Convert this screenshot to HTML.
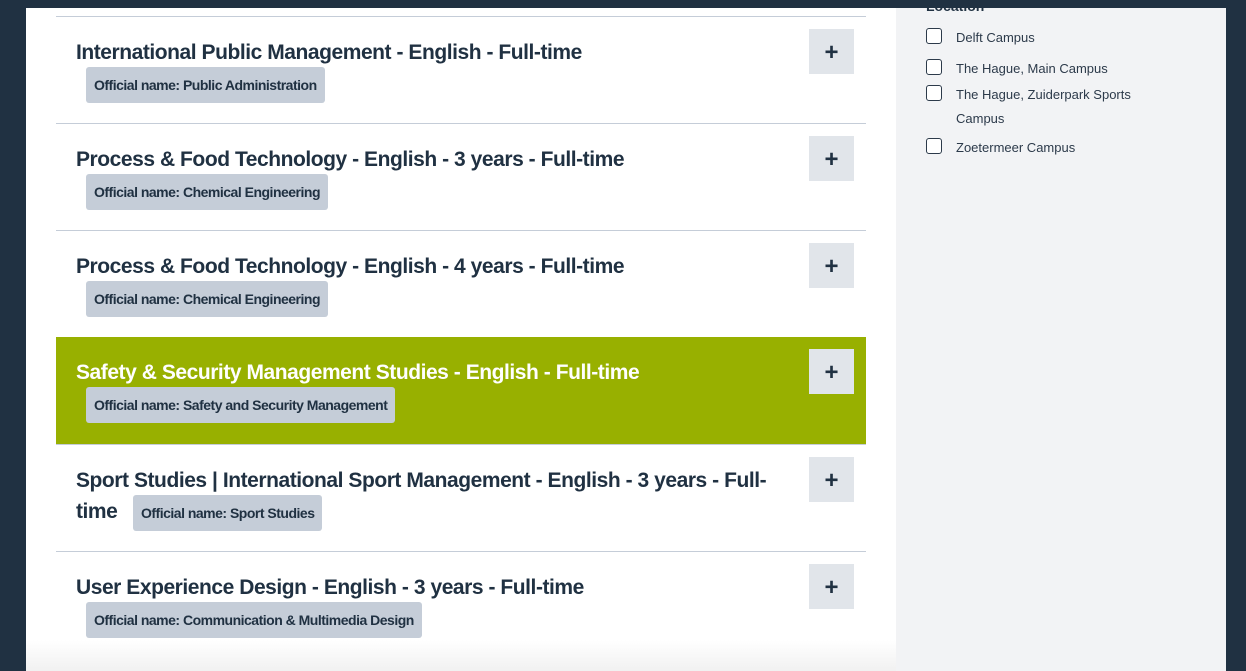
<!DOCTYPE html>
<html><head><meta charset="utf-8"><style>
*{margin:0;padding:0;box-sizing:border-box}
body{width:1246px;height:671px;overflow:hidden;background:#203142;position:relative;font-family:"Liberation Sans",sans-serif;color:#203142}
.main{position:absolute;left:26px;top:8px;width:870px;height:663px;background:#fff}
.fade{position:absolute;left:26px;top:640px;width:870px;height:31px;background:linear-gradient(#fff,#f1f1f1)}
.side{position:absolute;left:896px;top:8px;width:330px;height:663px;background:#f2f3f5}
.row{position:absolute;left:56px;width:810px;height:107px;border-top:1px solid #c5cdd8}
.row.g{background:#98b000;border-top:none}
.row.g .t{color:#fff}
.t{position:absolute;left:20px;top:20px;font-size:21px;font-weight:bold;letter-spacing:-0.45px;line-height:31px;color:#203142;white-space:nowrap}
.b{position:absolute;left:30px;top:50px;height:36px;padding:0 8px;background:#c5cdd8;border-radius:3px;font-size:14px;font-weight:bold;letter-spacing:-0.5px;line-height:36px;color:#203142;white-space:nowrap}
.p{position:absolute;left:753px;top:12px;width:45px;height:45px;background:#e1e5ea;font-size:24px;font-weight:bold;text-align:center;line-height:48px;color:#203142}
.loc{position:absolute;left:926px;font-size:13px;color:#2c3a4a;line-height:24px}
.cb{position:absolute;left:926px;width:16px;height:16px;border:1.5px solid #2c3a4a;border-radius:3px;background:#fff}
</style></head><body>
<div class="main"></div>
<div class="fade"></div>
<div class="side"></div>
<div style="position:absolute;left:926px;top:-2px;font-size:14px;font-weight:bold;color:#203142">Location</div>
<div style="position:absolute;left:0;top:0;width:1246px;height:8px;background:#203142"></div>

<div class="row" style="top:16px"><div class="t">International Public Management - English - Full-time</div><div class="b">Official name: Public Administration</div><div class="p">+</div></div>
<div class="row" style="top:123px"><div class="t">Process &amp; Food Technology - English - 3 years - Full-time</div><div class="b">Official name: Chemical Engineering</div><div class="p">+</div></div>
<div class="row" style="top:230px"><div class="t">Process &amp; Food Technology - English - 4 years - Full-time</div><div class="b">Official name: Chemical Engineering</div><div class="p">+</div></div>
<div class="row g" style="top:337px"><div class="t">Safety &amp; Security Management Studies - English - Full-time</div><div class="b">Official name: Safety and Security Management</div><div class="p">+</div></div>
<div class="row" style="top:444px"><div class="t">Sport Studies | International Sport Management - English - 3 years - Full-<br>time</div><div class="b" style="left:77px;top:50px">Official name: Sport Studies</div><div class="p">+</div></div>
<div class="row" style="top:551px"><div class="t">User Experience Design - English - 3 years - Full-time</div><div class="b">Official name: Communication &amp; Multimedia Design</div><div class="p">+</div></div>

<div class="cb" style="top:28px"></div><div class="loc" style="left:956px;top:26px">Delft Campus</div>
<div class="cb" style="top:59px"></div><div class="loc" style="left:956px;top:57px">The Hague, Main Campus</div>
<div class="cb" style="top:85px"></div><div class="loc" style="left:956px;top:83px">The Hague, Zuiderpark Sports<br>Campus</div>
<div class="cb" style="top:138px"></div><div class="loc" style="left:956px;top:136px">Zoetermeer Campus</div>
</body></html>
